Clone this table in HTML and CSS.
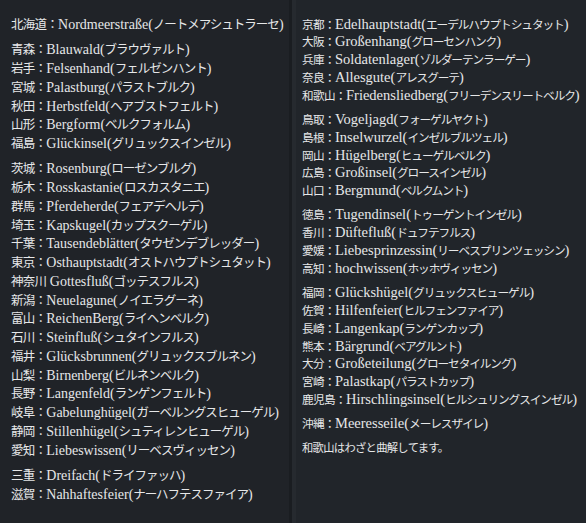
FILE: index.html
```html
<!DOCTYPE html>
<html lang="ja">
<head>
<meta charset="utf-8">
<link rel="stylesheet" href="styles.css">
</head>
<body>
<main class="sheet">
  <section class="col col-left">
    <div class="group">
      <p class="row"><span class="pref">北海道：</span>Nordmeerstraße(<span class="kana">ノートメアシュトラーセ</span>)</p>
    </div>
    <div class="group">
      <p class="row"><span class="pref">青森：</span>Blauwald(<span class="kana">ブラウヴァルト</span>)</p>
      <p class="row"><span class="pref">岩手：</span>Felsenhand(<span class="kana">フェルゼンハント</span>)</p>
      <p class="row"><span class="pref">宮城：</span>Palastburg(<span class="kana">パラストブルク</span>)</p>
      <p class="row"><span class="pref">秋田：</span>Herbstfeld(<span class="kana">ヘアブストフェルト</span>)</p>
      <p class="row"><span class="pref">山形：</span>Bergform(<span class="kana">ベルクフォルム</span>)</p>
      <p class="row"><span class="pref">福島：</span>Glückinsel(<span class="kana">グリュックスインゼル</span>)</p>
    </div>
    <div class="group">
      <p class="row"><span class="pref">茨城：</span>Rosenburg(<span class="kana">ローゼンブルグ</span>)</p>
      <p class="row"><span class="pref">栃木：</span>Rosskastanie(<span class="kana">ロスカスタニエ</span>)</p>
      <p class="row"><span class="pref">群馬：</span>Pferdeherde(<span class="kana">フェアデヘルデ</span>)</p>
      <p class="row"><span class="pref">埼玉：</span>Kapskugel(<span class="kana">カップスクーゲル</span>)</p>
      <p class="row"><span class="pref">千葉：</span>Tausendeblätter(<span class="kana">タウゼンデブレッダー</span>)</p>
      <p class="row"><span class="pref">東京：</span>Osthauptstadt(<span class="kana">オストハウプトシュタット</span>)</p>
      <p class="row"><span class="pref">神奈川</span> Gottesfluß(<span class="kana">ゴッテスフルス</span>)</p>
      <p class="row"><span class="pref">新潟：</span>Neuelagune(<span class="kana">ノイエラグーネ</span>)</p>
      <p class="row"><span class="pref">富山：</span>ReichenBerg(<span class="kana">ライヘンベルク</span>)</p>
      <p class="row"><span class="pref">石川：</span>Steinfluß(<span class="kana">シュタインフルス</span>)</p>
      <p class="row"><span class="pref">福井：</span>Glücksbrunnen(<span class="kana">グリュックスブルネン</span>)</p>
      <p class="row"><span class="pref">山梨：</span>Birnenberg(<span class="kana">ビルネンベルク</span>)</p>
      <p class="row"><span class="pref">長野：</span>Langenfeld(<span class="kana">ランゲンフェルト</span>)</p>
      <p class="row"><span class="pref">岐阜：</span>Gabelunghügel(<span class="kana">ガーベルングスヒューゲル</span>)</p>
      <p class="row"><span class="pref">静岡：</span>Stillenhügel(<span class="kana">シュティレンヒューゲル</span>)</p>
      <p class="row"><span class="pref">愛知：</span>Liebeswissen(<span class="kana">リーベスヴィッセン</span>)</p>
    </div>
    <div class="group">
      <p class="row"><span class="pref">三重：</span>Dreifach(<span class="kana">ドライファッハ</span>)</p>
      <p class="row"><span class="pref">滋賀：</span>Nahhaftesfeier(<span class="kana">ナーハフテスファイア</span>)</p>
    </div>
  </section>
  <section class="col col-right">
    <div class="group">
      <p class="row"><span class="pref">京都：</span>Edelhauptstadt(<span class="kana">エーデルハウプトシュタット</span>)</p>
      <p class="row"><span class="pref">大阪：</span>Großenhang(<span class="kana">グローセンハンク</span>)</p>
      <p class="row"><span class="pref">兵庫：</span>Soldatenlager(<span class="kana">ゾルダーテンラーゲー</span>)</p>
      <p class="row"><span class="pref">奈良：</span>Allesgute(<span class="kana">アレスグーテ</span>)</p>
      <p class="row"><span class="pref">和歌山：</span>Friedensliedberg(<span class="kana">フリーデンスリートベルク</span>)</p>
    </div>
    <div class="group">
      <p class="row"><span class="pref">鳥取：</span>Vogeljagd(<span class="kana">フォーゲルヤクト</span>)</p>
      <p class="row"><span class="pref">島根：</span>Inselwurzel(<span class="kana">インゼルブルツェル</span>)</p>
      <p class="row"><span class="pref">岡山：</span>Hügelberg(<span class="kana">ヒューゲルベルク</span>)</p>
      <p class="row"><span class="pref">広島：</span>Großinsel(<span class="kana">グロースインゼル</span>)</p>
      <p class="row"><span class="pref">山口：</span>Bergmund(<span class="kana">ベルクムント</span>)</p>
    </div>
    <div class="group">
      <p class="row"><span class="pref">徳島：</span>Tugendinsel(<span class="kana">トゥーゲントインゼル</span>)</p>
      <p class="row"><span class="pref">香川：</span>Düftefluß(<span class="kana">ドュフテフルス</span>)</p>
      <p class="row"><span class="pref">愛媛：</span>Liebesprinzessin(<span class="kana">リーベスプリンツェッシン</span>)</p>
      <p class="row"><span class="pref">高知：</span>hochwissen(<span class="kana">ホッホヴィッセン</span>)</p>
    </div>
    <div class="group">
      <p class="row"><span class="pref">福岡：</span>Glückshügel(<span class="kana">グリュックスヒューゲル</span>)</p>
      <p class="row"><span class="pref">佐賀：</span>Hilfenfeier(<span class="kana">ヒルフェンファイア</span>)</p>
      <p class="row"><span class="pref">長崎：</span>Langenkap(<span class="kana">ランゲンカップ</span>)</p>
      <p class="row"><span class="pref">熊本：</span>Bärgrund(<span class="kana">ベアグルント</span>)</p>
      <p class="row"><span class="pref">大分：</span>Großeteilung(<span class="kana">グローセタイルング</span>)</p>
      <p class="row"><span class="pref">宮崎：</span>Palastkap(<span class="kana">パラストカップ</span>)</p>
      <p class="row"><span class="pref">鹿児島：</span>Hirschlingsinsel(<span class="kana">ヒルシュリングスインゼル</span>)</p>
    </div>
    <div class="group">
      <p class="row"><span class="pref">沖縄：</span>Meeresseile(<span class="kana">メーレスザイレ</span>)</p>
    </div>
    <div class="group">
      <p class="row"><span class="note">和歌山はわざと曲解してます。</span></p>
    </div>
  </section>
</main>
</body>
</html>
```

FILE: styles.css
```css
html, body {
  margin: 0;
  padding: 0;
  background: #1f2227;
}

.sheet {
  display: flex;
  width: 586px;
  height: 523px;
  overflow: hidden;
  font-family: "Liberation Serif", "Noto Sans CJK JP", serif;
  color: #e6e7e8;
}

.col {
  box-sizing: border-box;
  height: 100%;
}

.col-left {
  width: 292px;
  padding: 15px 0 0 11px;
  background: #202328;
  border-right: 3px solid #1a1d21;
  font-size: 14px;
}

.col-right {
  flex: 1;
  padding: 14.5px 0 0 6px;
  background: #21252a;
  border-left: 4px solid #262a2f;
  font-size: 14.5px;
}

.pref,
.kana,
.note {
  font-family: "Noto Sans CJK JP", sans-serif;
}

.col-left .pref {
  font-size: 12.5px;
  letter-spacing: -0.75px;
}

.col-left .kana {
  font-size: 12.5px;
  letter-spacing: -1px;
}

.col-right .pref {
  font-size: 11.6px;
  letter-spacing: -0.6px;
}

.col-right .kana {
  font-size: 11.7px;
  letter-spacing: -1.1px;
}

.col-right .note {
  font-size: 11.3px;
  letter-spacing: -0.7px;
}

.group + .group {
  margin-top: 6.5px;
}

.row {
  margin: 0;
  white-space: nowrap;
}

.col-left .row {
  height: 18.75px;
  line-height: 18.75px;
}

.col-right .row {
  height: 17.8px;
  line-height: 17.8px;
}
```
